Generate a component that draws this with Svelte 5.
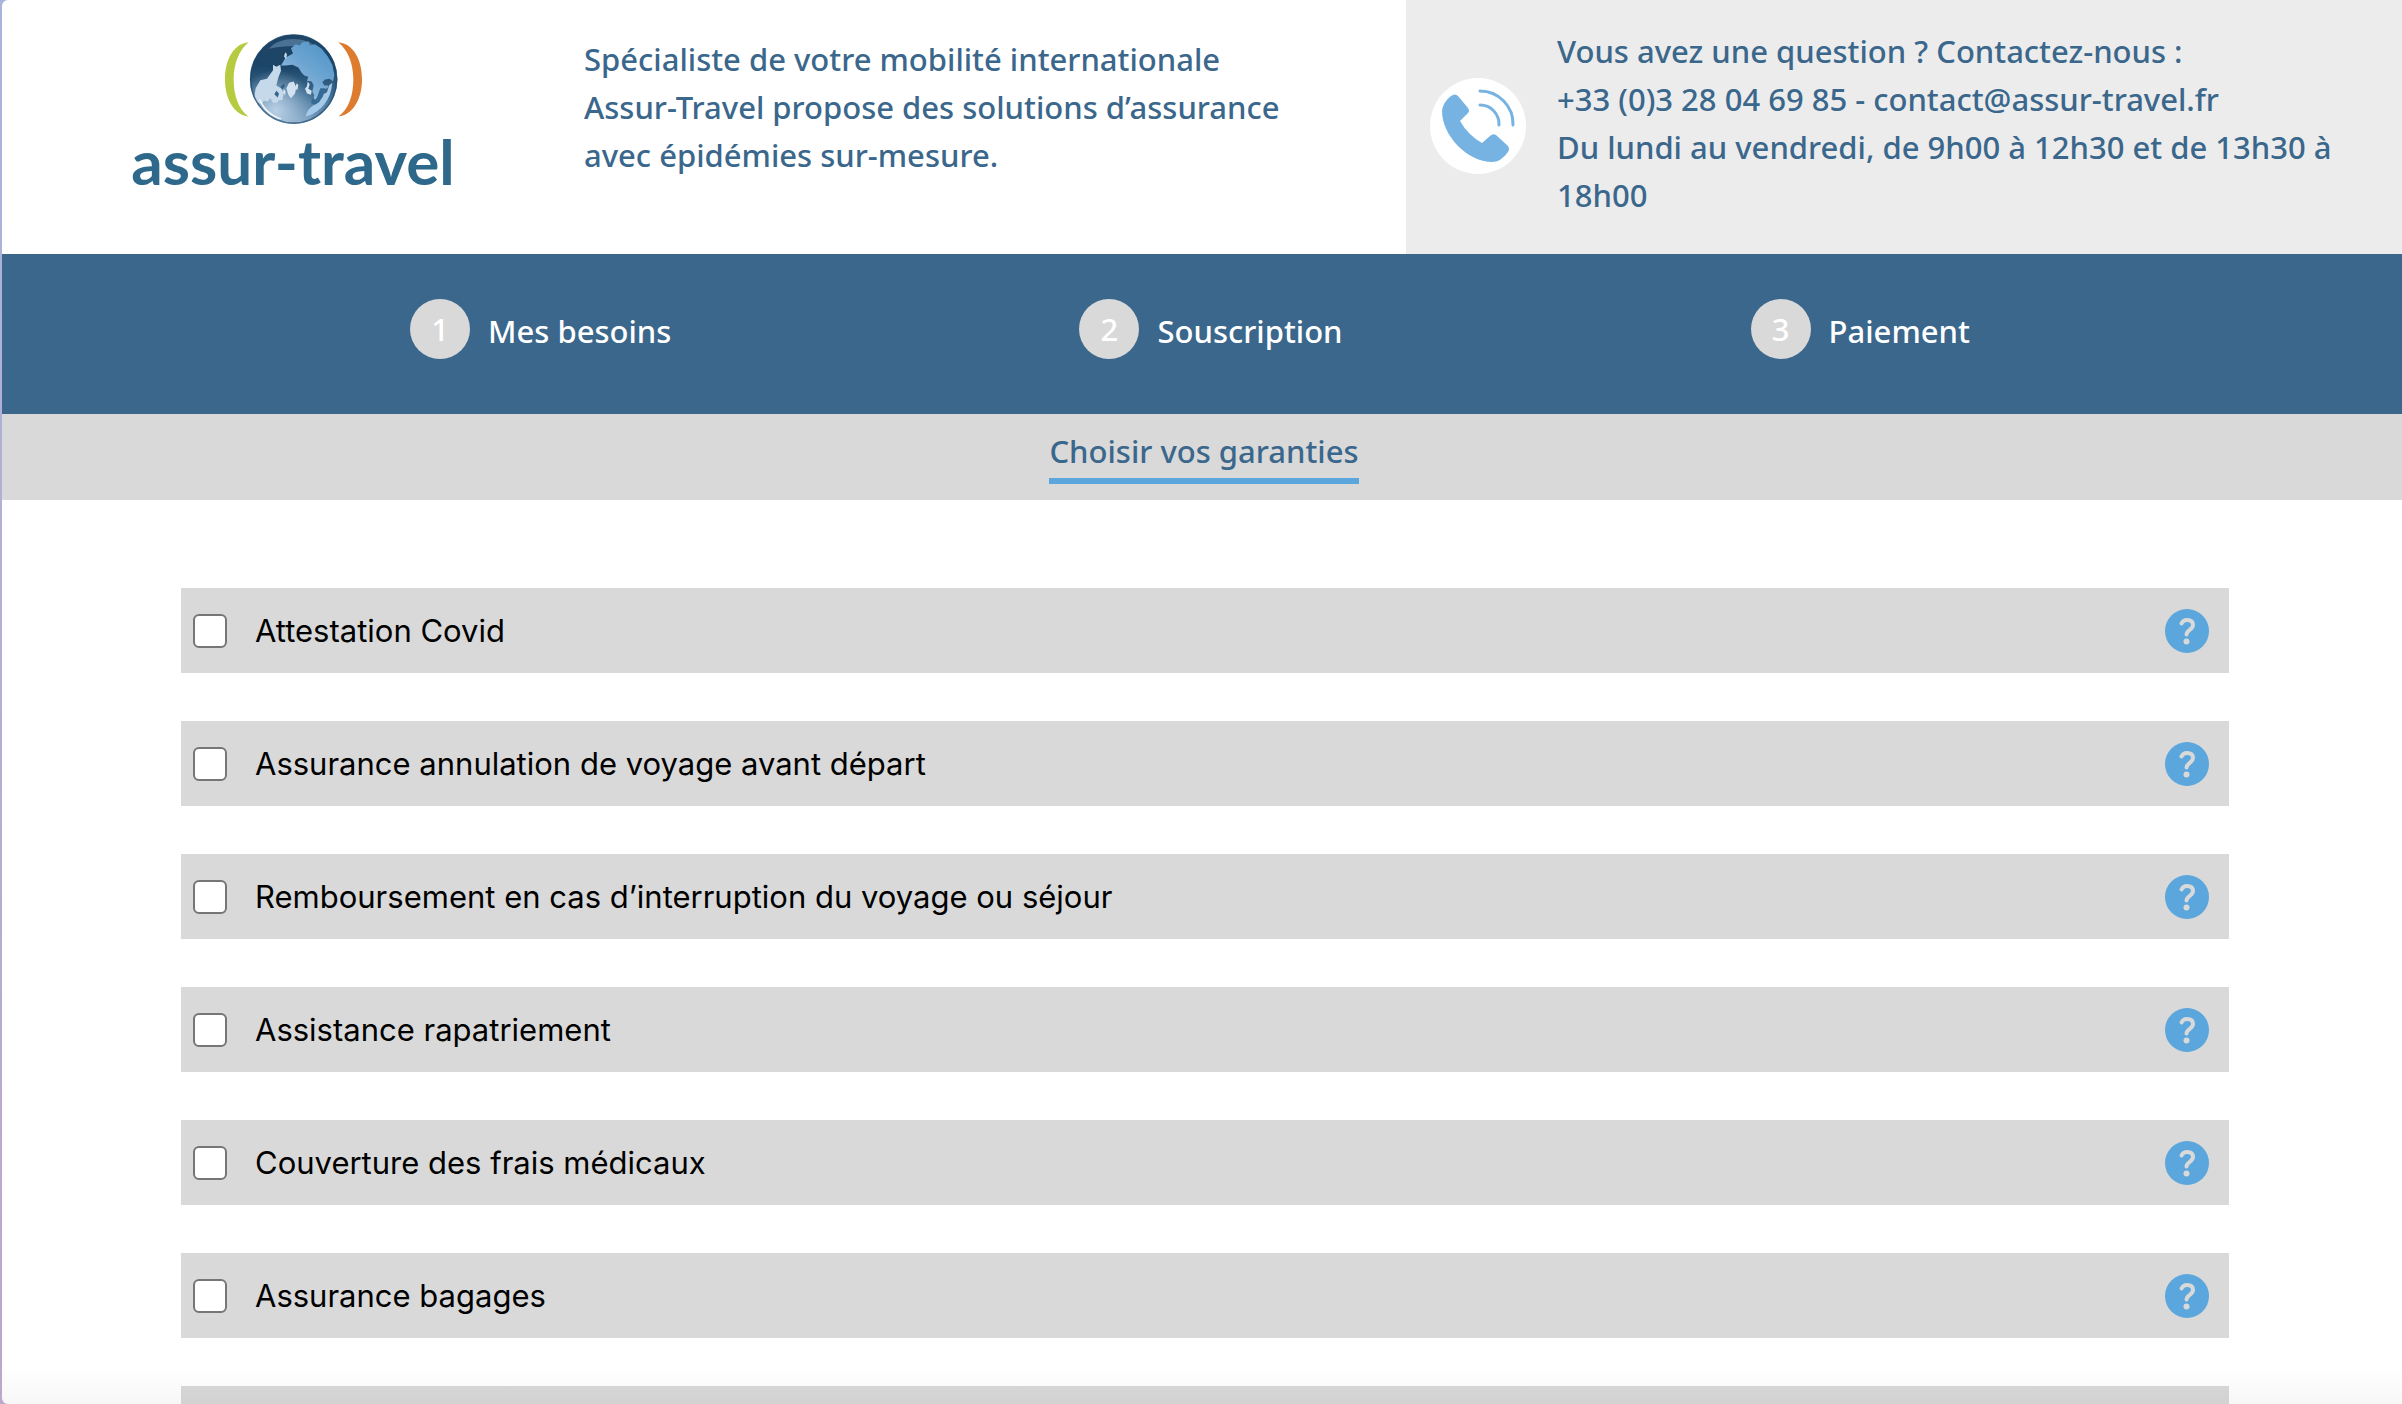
<script>
  const steps = ['Mes besoins', 'Souscription', 'Paiement'];
  const guarantees = [
    'Attestation Covid',
    'Assurance annulation de voyage avant départ',
    'Remboursement en cas d’interruption du voyage ou séjour',
    'Assistance rapatriement',
    'Couverture des frais médicaux',
    'Assurance bagages'
  ];
</script>

<div class="page">
  <header class="top">
    <div class="brand">
      <svg class="globe" viewBox="330 30 435 290" aria-hidden="true">
        <defs>
          <linearGradient id="sea" x1="0" y1="0" x2="0" y2="1">
            <stop offset="0" stop-color="#1f4566" />
            <stop offset="0.35" stop-color="#1b4466" />
            <stop offset="0.65" stop-color="#3a6a8e" />
            <stop offset="1" stop-color="#7fa3c4" />
          </linearGradient>
          <radialGradient id="glow" cx="0.3" cy="0.85" r="0.45">
            <stop offset="0" stop-color="#b9d0e6" />
            <stop offset="1" stop-color="#b9d0e6" stop-opacity="0" />
          </radialGradient>
          <linearGradient id="land" x1="0.9" y1="0" x2="0.2" y2="1">
            <stop offset="0" stop-color="#4d93c6" />
            <stop offset="0.5" stop-color="#6fa6d2" />
            <stop offset="1" stop-color="#a9cbe8" />
          </linearGradient>
        </defs>
        <path d="M413 66C368 70 342 118 342 178s28 106 70 111C382 266 368 226 368 178s16-88 45-112z" fill="#b6cb3f" />
        <path d="M682 66c45 4 71 52 71 112s-28 106-70 111c30-23 44-63 44-111s-16-88-45-112z" fill="#dd7b2f" />
        <ellipse cx="548" cy="177" rx="131" ry="134" fill="url(#sea)" />
        <ellipse cx="548" cy="177" rx="131" ry="134" fill="url(#glow)" />
        <path d="M474 86c30-38 112-40 148 0-50-12-100-10-148 0z" fill="#7fa9cc" opacity="0.45" />
        <path d="M510 136l14-24 22-12-6-16 14-12 12 4 8-10 20-2 2 12 16-4 20 14 18 22 14 26 6 30-4 20-10-8-14 2-8 8 6 10 12 0-2 8-16 4-4 22-14 14-10-6 4-12-6-12 4-18-6-12-14-2 4-12-12-4-8-8-10-16-18-8-20 2z" fill="url(#land)" />
        <path d="M523 96l5 6-3 16-6-10zM486 150l0-16 10 6 12-6 2 18-8 20-6 24 14 8 8 14-4 22-10 0-6 8-12 0-8-14-8 10-12-2-6 10-14-6-8-16 4-26 14-24 20-4z" fill="#c6d9eb" />
        <path d="M534 188l14-4 8 18-4 18-12 14-8-10-6-20zM590 184l6 8-4 14 10 6-2 12-12-4-6-14 6-8zM556 190l6 4-3 16-5-4zM518 206l6 8-2 12-6-8zM494 212l8 4-2 12-8-4z" fill="#d3e2f0" />
        <path d="M490 222l6-10 8 8-4 12zM508 200l10-10 4 8-8 10z" fill="#35648a" />
        <path d="M664 188c-4 50-32 88-80 102 4-20 14-28 26-36l14-10 10-20 14-8 6-20z" fill="#a5c9e8" />
        <path d="M628 204l14 0-6 24-12 18-12 8-6-6 12-16zM606 232l8 8-6 14-8-6z" fill="#356b94" />
        <path d="M446 238c14 28 36 48 64 58-30-6-54-26-64-58z" fill="#fff" stroke="#fff" stroke-width="3" opacity="0.85" />
        <ellipse cx="548" cy="177" rx="129" ry="132" fill="none" stroke="#1c486c" stroke-width="5" opacity="0.65" />
      </svg>
      <span class="wordmark">assur-travel</span>
    </div>
    <p class="pitch">
      Spécialiste de votre mobilité internationale<br />
      Assur-Travel propose des solutions d’assurance<br />
      avec épidémies sur-mesure.
    </p>
    <div class="contact">
      <svg class="phone" viewBox="0 0 96 96" aria-hidden="true">
        <circle cx="48" cy="48" r="48" fill="#fff" />
        <path d="M21 18q4-3 7 0l10 12q2 3 0 5l-8 8q8 14 22 22l8-7q3-3 6-1l12 11q2 3 0 6-7 10-16 10C38 84 12 58 12 33q1-9 9-15z" fill="#76b3e3" />
        <path d="M50 13a33 33 0 0 1 33 34M50 27a19 19 0 0 1 19 20" fill="none" stroke="#76b3e3" stroke-width="3" stroke-linecap="round" />
      </svg>
      <p>
        Vous avez une question ? Contactez-nous :<br />
        +33 (0)3 28 04 69 85 - contact@assur-travel.fr<br />
        Du lundi au vendredi, de 9h00 à 12h30 et de 13h30 à 18h00
      </p>
    </div>
  </header>

  <ol class="steps">
    {#each steps as step, i}
      <li><span class="number">{i + 1}</span><span class="step">{step}</span></li>
    {/each}
  </ol>

  <nav class="substeps"><a href="#garanties">Choisir vos garanties</a></nav>

  <main id="garanties">
    {#each guarantees as name, i}
      <div class="row">
        <input type="checkbox" id="g{i}" />
        <label for="g{i}">{name}</label>
        <button type="button" aria-label="Aide : {name}">
          <svg viewBox="0 0 44 44" aria-hidden="true">
            <circle cx="22" cy="22" r="22" fill="#5aa6dd" />
            <path d="M16.500 14.500q1.500-3.500 5.500-3.500 6 0 6 5c0 4.500-6.500 5.500-6.500 9.500" fill="none" stroke="#d9d9d9" stroke-width="4" stroke-linecap="round" stroke-linejoin="round" />
            <circle cx="21.500" cy="32.500" r="3" fill="#d9d9d9" />
          </svg>
        </button>
      </div>
    {/each}
    <div class="row"></div>
  </main>
</div>

<style>
  :global(body) {
    margin: 0;
    background: linear-gradient(#a9b4dc, #b4aed4 50%, #bba8cb);
  }
  .page {
    box-sizing: border-box;
    height: 100vh;
    display: flex;
    flex-direction: column;
    overflow: hidden;
    margin-left: 2px;
    background: #fff;
    border-radius: 6px 0 0 6px;
    color: #3a678b;
    font: 500 31px/48px 'Noto Sans', sans-serif;
    position: relative;
  }
  .page::after {
    content: '';
    position: absolute;
    inset: auto 0 0 0;
    height: 40px;
    background: linear-gradient(transparent, rgba(0, 0, 0, 0.03));
    pointer-events: none;
  }
  p {
    margin: 0;
  }
  .top {
    display: grid;
    grid-template-columns: 582px 1fr 996px;
    min-height: 254px;
    flex: none;
  }
  .brand {
    display: flex;
    flex-direction: column;
    align-items: center;
    padding: 30px 0 0;
  }
  .globe {
    width: 145px;
    height: 97px;
  }
  .wordmark {
    color: #2e688b;
    font: 700 62px/68px Lato, sans-serif;
  }
  .pitch {
    padding-top: 35px;
  }
  .contact {
    display: flex;
    align-items: flex-start;
    gap: 31px;
    padding: 27px 24px 0;
    background: #ececec;
  }
  .phone {
    flex: none;
    width: 96px;
    height: 96px;
    margin-top: 51px;
  }
  .steps {
    display: flex;
    justify-content: space-evenly;
    align-items: center;
    flex: none;
    box-sizing: border-box;
    min-height: 160px;
    margin: 0;
    padding: 0 24px 10px 0;
    list-style: none;
    background: #3a678b;
    color: #fff;
  }
  .steps li {
    display: flex;
    align-items: center;
    gap: 18px;
  }
  .number {
    width: 60px;
    border-radius: 50%;
    background: #d9d9d9;
    line-height: 60px;
    text-align: center;
  }
  .step {
    padding-top: 4px;
  }
  .substeps {
    display: flex;
    justify-content: center;
    align-items: flex-start;
    flex: none;
    box-sizing: border-box;
    min-height: 86px;
    padding: 13px 0 0 4px;
    background: #d9d9d9;
  }
  .substeps a {
    padding-bottom: 3px;
    border-bottom: 6px solid #5aa6dd;
    color: inherit;
    text-decoration: none;
  }
  main {
    display: flex;
    flex-direction: column;
    gap: 48px;
    padding: 88px 173px 0 179px;
  }
  .row {
    display: flex;
    align-items: center;
    flex: none;
    box-sizing: border-box;
    min-height: 85px;
    padding: 0 20px 0 12px;
    background: #d9d9d9;
    color: #000;
    font: 400 31px/48px Inter, sans-serif;
  }
  .row input {
    appearance: none;
    box-sizing: border-box;
    width: 34px;
    height: 34px;
    margin: 0 28px 0 0;
    border: 2px solid #767676;
    border-radius: 6px;
    background: #fff;
  }
  .row label {
    flex: 1;
  }
  .row button {
    width: 44px;
    height: 44px;
    padding: 0;
    border: 0;
    background: none;
  }
  .row button svg {
    display: block;
  }
</style>
